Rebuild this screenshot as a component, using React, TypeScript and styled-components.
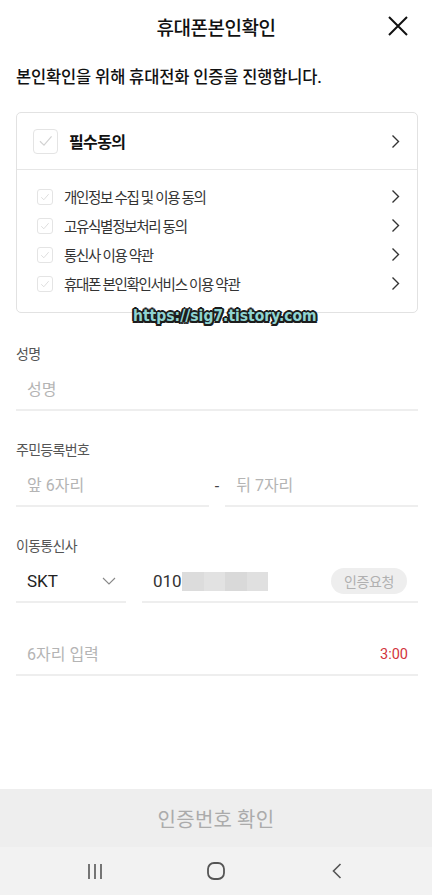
import React from 'react';
import styled, { createGlobalStyle } from 'styled-components';

const GlobalStyle = createGlobalStyle`
  html, body {
    margin: 0;
    padding: 0;
    background: #ffffff;
  }
  body {
    font-family: Roboto, "Noto Sans CJK KR", sans-serif;
    color: #222;
  }
  * {
    box-sizing: border-box;
  }
`;

const Page = styled.div`
  position: relative;
  min-height: 895px;
  display: flex;
  flex-direction: column;
`;

const Header = styled.header`
  height: 52px;
  display: grid;
  grid-template-columns: 1fr auto 1fr;
  align-items: center;
  padding: 0 24px;
`;

const Title = styled.h1`
  grid-column: 2;
  margin: 0;
  font-size: 19px;
  font-weight: 500;
  letter-spacing: -0.5px;
  color: #111;
`;

const CloseButton = styled.button`
  justify-self: end;
  width: 20px;
  height: 20px;
  padding: 0;
  border: none;
  background: none;
  display: flex;
  cursor: pointer;
`;

const Body = styled.main`
  padding: 0 14px 0 16px;
  flex: 1;
`;

const Lead = styled.p`
  margin: 14px 0 22px;
  font-size: 16.5px;
  line-height: 24px;
  font-weight: 500;
  letter-spacing: -0.15px;
  color: #111;
`;

const Card = styled.section`
  border: 1px solid #e2e2e2;
  border-radius: 5px;
`;

const AllRow = styled.div`
  height: 57px;
  display: flex;
  align-items: center;
  padding: 0 17px 0 16px;
  border-bottom: 1px solid #e6e6e6;
`;

const Box = styled.span<{ $size: number }>`
  width: ${(p) => p.$size}px;
  height: ${(p) => p.$size}px;
  border: 1px solid #e4e4e4;
  border-radius: ${(p) => (p.$size > 20 ? 4 : 3)}px;
  display: flex;
  align-items: center;
  justify-content: center;
  flex-shrink: 0;
`;

const AllLabel = styled.span`
  margin-left: 11px;
  flex: 1;
  font-size: 16px;
  font-weight: 700;
  letter-spacing: -0.6px;
  color: #111;
`;

const TermList = styled.ul`
  list-style: none;
  margin: 0;
  padding: 12px 17px 14px 20px;
`;

const Term = styled.li`
  height: 29px;
  display: flex;
  align-items: center;
`;

const TermLabel = styled.span`
  margin-left: 11px;
  flex: 1;
  font-size: 14.5px;
  letter-spacing: -1.3px;
  color: #333;
`;

const Field = styled.div<{ $top?: number }>`
  margin-top: ${(p) => p.$top ?? 29}px;
`;

const Label = styled.div`
  font-size: 14px;
  line-height: 20px;
  letter-spacing: -0.7px;
  color: #555;
  margin-bottom: 5px;
`;

const Row = styled.div<{ $gap: number }>`
  display: flex;
  align-items: center;
  gap: ${(p) => p.$gap}px;
`;

const Line = styled.div<{ $width?: number }>`
  height: 42px;
  min-width: 0;
  display: flex;
  align-items: center;
  padding: 0 10px 0 11px;
  border-bottom: 2px solid #eeeeee;
  ${(p) => (p.$width ? `width: ${p.$width}px; flex-shrink: 0;` : 'flex: 1;')}
`;

const Input = styled.input`
  flex: 1;
  width: 0;
  min-width: 0;
  border: none;
  outline: none;
  padding: 0;
  background: transparent;
  font-family: Roboto, "Noto Sans CJK KR", sans-serif;
  font-size: 16px;
  letter-spacing: 0;
  color: #222;

  &::placeholder {
    color: #b4b4b4;
  }
`;

const Dash = styled.span`
  font-size: 16px;
  color: #444;
`;

const Value = styled.span`
  font-size: 17px;
  color: #222;
  flex: 1;
`;

const Phone = styled.span`
  flex: 1;
  display: flex;
  align-items: center;
  font-size: 17px;
  color: #333;
`;

const Mask = styled.span`
  display: inline-block;
  width: 86px;
  height: 19px;
  background: linear-gradient(90deg, #dcdcdc 0 25%, #e2e2e2 25% 50%, #d9d9d9 50% 75%, #e0e0e0 75%);
`;

const RequestButton = styled.button`
  height: 26px;
  padding: 0 13px;
  margin-right: 1px;
  border: none;
  border-radius: 13px;
  background: #eeeeee;
  font-family: "Noto Sans CJK KR", sans-serif;
  font-size: 14px;
  letter-spacing: -0.4px;
  color: #b0b0b0;
`;

const Timer = styled.span`
  font-size: 14.5px;
  color: #d2343c;
`;

const ConfirmButton = styled.button`
  height: 58px;
  width: 100%;
  border: none;
  background: #eeeeee;
  font-family: "Noto Sans CJK KR", sans-serif;
  font-size: 20px;
  letter-spacing: 0.3px;
  color: #ababab;
`;

const NavBar = styled.nav`
  height: 48px;
  background: #f2f2f2;
  display: grid;
  grid-template-columns: repeat(3, 1fr);
  align-items: center;
  justify-items: center;
  padding: 0 34px;
`;

const Watermark = styled.div`
  position: absolute;
  left: 133px;
  top: 307px;
  font-family: "DejaVu Sans Condensed", "DejaVu Sans", sans-serif;
  font-stretch: condensed;
  font-weight: 700;
  font-size: 15.5px;
  letter-spacing: 0;
  color: #8fd4d2;
  text-shadow: -2px 0 0 #1c1c1c, 2px 0 0 #1c1c1c, 0 -2px 0 #1c1c1c, 0 2px 0 #1c1c1c,
    -1.5px -1.5px 0 #1c1c1c, 1.5px -1.5px 0 #1c1c1c, -1.5px 1.5px 0 #1c1c1c, 1.5px 1.5px 0 #1c1c1c;
`;

const Check = ({ size }: { size: number }) => (
  <svg width={size * 0.62} height={size * 0.62} viewBox="0 0 16 16">
    <polyline points="2,8.5 6.2,12.5 14,3.5" fill="none" stroke="#d2d2d2" strokeWidth="1.2" />
  </svg>
);

const ChevronRight = () => (
  <svg width="9" height="15" viewBox="0 0 9 15">
    <polyline points="1.5,1.5 7.5,7.5 1.5,13.5" fill="none" stroke="#333" strokeWidth="1.4" />
  </svg>
);

const ChevronDown = () => (
  <svg width="14" height="8" viewBox="0 0 14 8">
    <polyline points="1,1 7,7 13,1" fill="none" stroke="#888" strokeWidth="1.1" />
  </svg>
);

const terms = [
  '개인정보 수집 및 이용 동의',
  '고유식별정보처리 동의',
  '통신사 이용 약관',
  '휴대폰 본인확인서비스 이용 약관',
];

export default function App() {
  return (
    <>
      <GlobalStyle />
      <Page>
        <Header>
          <Title>휴대폰본인확인</Title>
          <CloseButton aria-label="닫기">
            <svg width="20" height="20" viewBox="0 0 20 20">
              <path d="M1 1 L19 19 M19 1 L1 19" stroke="#111" strokeWidth="2" />
            </svg>
          </CloseButton>
        </Header>

        <Body>
          <Lead>본인확인을 위해 휴대전화 인증을 진행합니다.</Lead>

          <Card>
            <AllRow>
              <Box $size={25}>
                <Check size={25} />
              </Box>
              <AllLabel>필수동의</AllLabel>
              <ChevronRight />
            </AllRow>
            <TermList>
              {terms.map((t) => (
                <Term key={t}>
                  <Box $size={16}>
                    <Check size={16} />
                  </Box>
                  <TermLabel>{t}</TermLabel>
                  <ChevronRight />
                </Term>
              ))}
            </TermList>
          </Card>

          <Field $top={31}>
            <Label>성명</Label>
            <Line>
              <Input placeholder="성명" />
            </Line>
          </Field>

          <Field>
            <Label>주민등록번호</Label>
            <Row $gap={6}>
              <Line>
                <Input placeholder="앞 6자리" />
              </Line>
              <Dash>-</Dash>
              <Line>
                <Input placeholder="뒤 7자리" />
              </Line>
            </Row>
          </Field>

          <Field>
            <Label>이동통신사</Label>
            <Row $gap={16}>
              <Line $width={110}>
                <Value>SKT</Value>
                <ChevronDown />
              </Line>
              <Line>
                <Phone>
                  010
                  <Mask />
                </Phone>
                <RequestButton>인증요청</RequestButton>
              </Line>
            </Row>
          </Field>

          <Field $top={31}>
            <Line>
              <Input placeholder="6자리 입력" />
              <Timer>3:00</Timer>
            </Line>
          </Field>
        </Body>

        <ConfirmButton>인증번호 확인</ConfirmButton>
        <NavBar>
          <svg width="16" height="15" viewBox="0 0 16 15">
            <path d="M2 0 V15 M8 0 V15 M14 0 V15" stroke="#555" strokeWidth="1.6" />
          </svg>
          <svg width="18" height="18" viewBox="0 0 18 18">
            <rect x="1" y="1" width="16" height="16" rx="6" fill="none" stroke="#555" strokeWidth="1.8" />
          </svg>
          <svg width="10" height="16" viewBox="0 0 10 16">
            <polyline points="8.5,1 1.5,8 8.5,15" fill="none" stroke="#555" strokeWidth="1.6" />
          </svg>
        </NavBar>

        <Watermark>https://sig7.tistory.com</Watermark>
      </Page>
    </>
  );
}
